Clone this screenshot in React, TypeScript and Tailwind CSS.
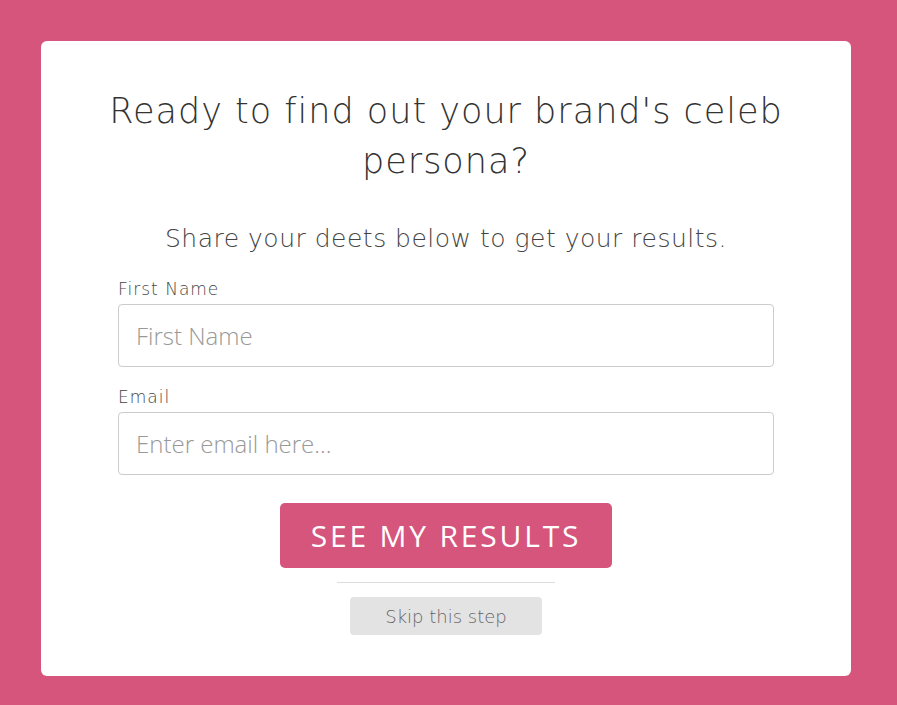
import React from 'react';

export default function App() {
  return (
    <div className="min-h-[705px] w-full bg-[#d6557d] pl-[41px] pr-[46px] pt-[41px] pb-[29px] font-['Open_Sans','Liberation_Sans',sans-serif]">
      <div className="flex h-[635px] flex-col items-center rounded-[6px] bg-white pt-[45px]">
        <h1 className="w-[720px] text-center font-['DejaVu_Sans','Open_Sans',sans-serif] text-[35px] font-extralight leading-[50px] tracking-[1px] text-[#333]">
          Ready to find out your brand's celeb persona?
        </h1>
        <p className="mt-[37px] text-center font-['DejaVu_Sans','Open_Sans',sans-serif] text-[25px] font-extralight leading-[32px] tracking-[0.5px] text-[#444]">
          Share your deets below to get your results.
        </p>

        <form className="mt-[22px] flex w-[656px] flex-col">
          <label className="font-['DejaVu_Sans','Open_Sans',sans-serif] text-[17px] font-extralight leading-[24px] tracking-[1px] text-[#444]">
            First Name
          </label>
          <input
            type="text"
            placeholder="First Name"
            className="mt-[3px] h-[63px] rounded-[4px] border border-[#cccccc] px-[17px] text-[24px] font-light text-[#333] placeholder:text-[#999] outline-none"
          />
          <label className="mt-[18px] font-['DejaVu_Sans','Open_Sans',sans-serif] text-[17px] font-extralight leading-[24px] tracking-[1px] text-[#444]">
            Email
          </label>
          <input
            type="email"
            placeholder="Enter email here..."
            className="mt-[3px] h-[63px] rounded-[4px] border border-[#cccccc] px-[17px] text-[24px] font-light text-[#333] placeholder:text-[#999] outline-none"
          />
        </form>

        <button
          type="button"
          className="mt-[28px] h-[65px] w-[332px] rounded-[5px] bg-[#d6557d] text-[30px] font-normal tracking-[2.8px] text-white"
        >
          SEE MY RESULTS
        </button>
        <div className="mt-[14px] h-px w-[218px] bg-[#dddddd]" />
        <button
          type="button"
          className="mt-[14px] h-[38px] w-[192px] rounded-[4px] bg-[#e3e3e3] font-['DejaVu_Sans','Open_Sans',sans-serif] text-[18px] font-extralight text-[#666]"
        >
          Skip this step
        </button>
      </div>
    </div>
  );
}
